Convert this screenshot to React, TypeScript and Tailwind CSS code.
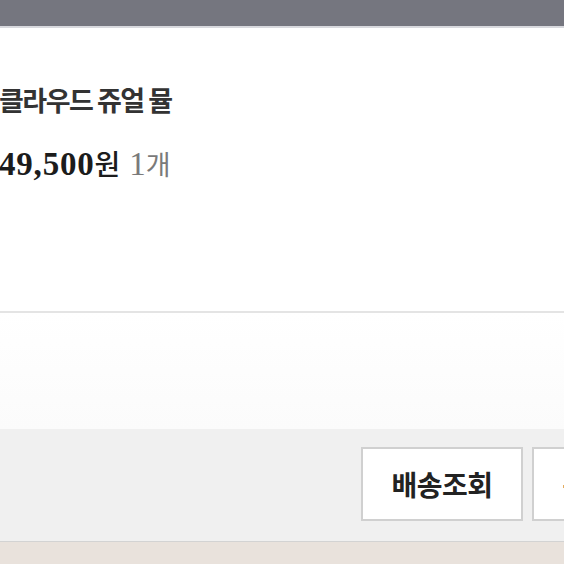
const sans = "font-['Noto_Sans_CJK_KR','Noto_Sans',sans-serif]"
const serif = "font-['Liberation_Serif','Noto_Sans_CJK_KR',serif]"

export default function App() {
  return (
    <div className={`w-[564px] h-[564px] overflow-hidden flex flex-col bg-white ${sans}`}>
      {/* app header strip */}
      <div className="h-[26px] bg-[#75767f]" />
      <div className="h-[2px] bg-[#d8d9de]" />

      {/* order item */}
      <div className="h-[283px] bg-white">
        <div className="pt-[55px] -ml-[1px]">
          <h2 className="text-[27px] leading-[34px] font-bold tracking-[-1.5px] text-[#333333]">
            클라우드 쥬얼 뮬
          </h2>
          <div className="mt-[27px] flex items-baseline leading-[38px]">
            <span className={`${serif} text-[33px] font-bold tracking-[0.8px] text-[#1c1c1c]`}>49,500</span>
            <span className="text-[28px] font-medium text-[#1c1c1c]">원</span>
            <span className={`${serif} ml-[9px] text-[33px] text-[#7a7a7a]`}>1</span>
            <span className="text-[27px] text-[#7a7a7a]">개</span>
          </div>
        </div>
      </div>
      <div className="h-[2px] bg-[#e4e4e4]" />
      <div className="h-[116px] bg-gradient-to-b from-white to-[#fbfbfb]" />

      {/* actions */}
      <div className="h-[113px] bg-[#f0f0f0] border-b border-[#d3d3d3] flex gap-[9px] pt-[18px] pl-[361px]">
        <button className="shrink-0 w-[162px] h-[74px] bg-white border-2 border-[#d0d0d0] text-[28px] font-bold text-[#222222] tracking-[-0.5px]">
          배송조회
        </button>
        <button className="shrink-0 w-[162px] h-[74px] bg-white border-2 border-[#d0d0d0] text-[28px] font-bold text-[#222222] tracking-[-0.5px]">
          구매확정
        </button>
      </div>
      <div className="flex-1 bg-[#e9e2dc]" />
    </div>
  )
}
